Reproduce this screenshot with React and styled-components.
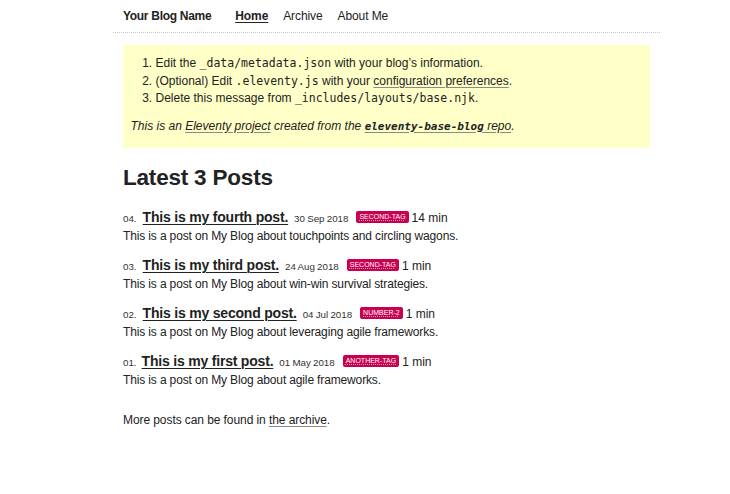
import React from "react";
import styled, { createGlobalStyle } from "styled-components";

const Global = createGlobalStyle`
  html, body { margin: 0; padding: 0; background: #fff; }
  body {
    font-family: "Liberation Sans", Arial, sans-serif;
    color: #222;
    font-size: 12px;
  }
`;

const Page = styled.div`
  margin-left: 113px;
  width: 547px;
`;

const Header = styled.header`
  display: flex;
  align-items: center;
  height: 32px;
  border-bottom: 1px dotted #c8c8c8;
  padding-left: 10px;
`;

const Brand = styled.a`
  font-weight: 700;
  color: #222;
  text-decoration: none;
  letter-spacing: -0.3px;
  margin-right: 24px;
`;

const Nav = styled.nav`
  display: flex;
  gap: 15px;
`;

const NavLink = styled.a`
  color: #222;
  letter-spacing: -0.1px;
  font-weight: ${(p) => (p.$active ? 700 : 400)};
  text-decoration: ${(p) => (p.$active ? "underline" : "none")};
  text-underline-offset: 2px;
`;

const Main = styled.main`
  padding: 12px 10px 20px;
`;

const Warning = styled.div`
  background: #ffffc8;
  padding: 10px 7.5px 13px;
`;

const Steps = styled.ol`
  margin: 0 0 10px;
  padding-left: 25px;
  line-height: 17.5px;
`;

const Code = styled.code`
  font-family: "DejaVu Sans Mono", "Liberation Mono", monospace;
  font-size: ${(p) => (p.$strong ? "11px" : "11.5px")};
  font-weight: ${(p) => (p.$strong ? 700 : 400)};
`;

const Link = styled.a`
  color: #222;
  text-decoration: underline;
  text-decoration-color: #8a8a8a;
  text-underline-offset: 2px;
`;

const Note = styled.p`
  margin: 0;
  font-style: italic;
  line-height: 17.4px;
`;

const Title = styled.h1`
  font-size: 22.5px;
  letter-spacing: -0.2px;
  font-weight: 700;
  line-height: 29px;
  margin: 15px 0 0;
  color: #222;
`;

const PostList = styled.ol`
  list-style: none;
  padding: 0;
  margin: 15px 0 0;
`;

const Post = styled.li`
  margin-bottom: 11px;
`;

const PostHead = styled.div`
  display: flex;
  align-items: baseline;
  height: 20px;
  line-height: 20px;
`;

const Num = styled.span`
  font-size: 9.75px;
  color: #333;
`;

const PostLink = styled.a`
  font-size: 14px;
  letter-spacing: -0.2px;
  font-weight: 700;
  color: #222;
  padding: 0 6px 0 ${(p) => p.$pad}px;
  text-decoration: underline;
  text-decoration-thickness: 1px;
  text-underline-offset: 2px;
`;

const DateText = styled.time`
  font-size: 9.75px;
  color: #333;
  word-spacing: -0.5px;
`;

const Tag = styled.a`
  align-self: center;
  display: inline-block;
  font-size: 7px;
  line-height: 9px;
  text-transform: uppercase;
  padding: 1px 3px 1.5px;
  margin-left: 8px;
  background: #c8004f;
  color: #fff;
  border-radius: 2px;
  text-decoration: underline dotted;
  text-decoration-color: rgba(255,255,255,0.6);
`;

const Minutes = styled.span`
  margin-left: 3px;
  font-size: 12px;
`;

const Desc = styled.p`
  margin: 2px 0 0;
  line-height: 15px;
  letter-spacing: -0.14px;
`;

const More = styled.p`
  margin: 24px 0 0;
  line-height: 17.4px;
  letter-spacing: -0.08px;
`;

const posts = [
  { n: "04", title: "This is my fourth post.", date: "30 Sep 2018", tag: "second-tag", min: "14 min", desc: "This is a post on My Blog about touchpoints and circling wagons.", pad: 6 },
  { n: "03", title: "This is my third post.", date: "24 Aug 2018", tag: "second-tag", min: "1 min", desc: "This is a post on My Blog about win-win survival strategies.", pad: 6 },
  { n: "02", title: "This is my second post.", date: "04 Jul 2018", tag: "number-2", min: "1 min", desc: "This is a post on My Blog about leveraging agile frameworks.", pad: 6 },
  { n: "01", title: "This is my first post.", date: "01 May 2018", tag: "another-tag", min: "1 min", desc: "This is a post on My Blog about agile frameworks.", pad: 5 },
];

export default function App() {
  return (
    <>
      <Global />
      <Page>
        <Header>
          <Brand href="#">Your Blog Name</Brand>
          <Nav>
            <NavLink href="#" $active>Home</NavLink>
            <NavLink href="#">Archive</NavLink>
            <NavLink href="#">About Me</NavLink>
          </Nav>
        </Header>
        <Main>
          <Warning>
            <Steps>
              <li>Edit the <Code>_data/metadata.json</Code> with your blog’s information.</li>
              <li>(Optional) Edit <Code>.eleventy.js</Code> with your <Link href="#">configuration preferences</Link>.</li>
              <li>Delete this message from <Code>_includes/layouts/base.njk</Code>.</li>
            </Steps>
            <Note>
              This is an <Link href="#">Eleventy project</Link> created from the <Link href="#"><Code $strong>eleventy-base-blog</Code> repo</Link>.
            </Note>
          </Warning>
          <Title>Latest 3 Posts</Title>
          <PostList>
            {posts.map((p) => (
              <Post key={p.n}>
                <PostHead>
                  <Num>{p.n}.</Num>
                  <PostLink href="#" $pad={p.pad}>{p.title}</PostLink>
                  <DateText>{p.date}</DateText>
                  <Tag href="#">{p.tag}</Tag>
                  <Minutes>{p.min}</Minutes>
                </PostHead>
                <Desc>{p.desc}</Desc>
              </Post>
            ))}
          </PostList>
          <More>More posts can be found in <Link href="#">the archive</Link>.</More>
        </Main>
      </Page>
    </>
  );
}
